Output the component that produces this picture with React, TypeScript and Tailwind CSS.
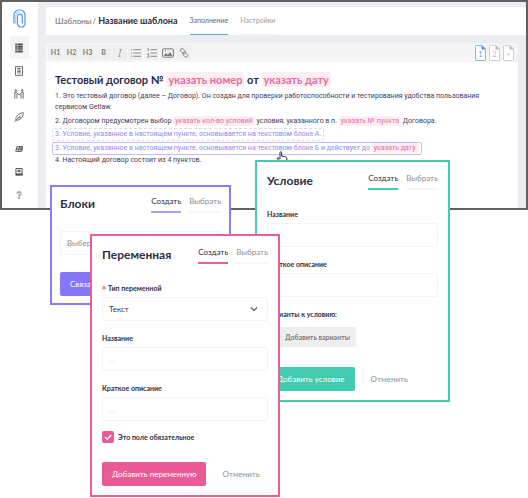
import React from "react";

type Accent = "violet" | "teal" | "pink";

const borders: Record<Accent, string> = {
  violet: "border-[#8a7cf6]",
  teal: "border-[#45cbb0]",
  pink: "border-[#e95d98]",
};
const lines: Record<Accent, string> = {
  violet: "border-[#a99ffa]",
  teal: "border-[#45cbb0]",
  pink: "border-[#e95d98]",
};
const fills: Record<Accent, string> = {
  violet: "bg-[#8578f8]",
  teal: "bg-[#43cbb0]",
  pink: "bg-[#ea5b96]",
};

const field = "block h-6 w-full rounded-xs border border-[#f4f4f5] bg-white px-1.5 text-[8px] text-[#3d3d50]";

function Icon({ children, size = "size-3" }: { children: React.ReactNode; size?: string }) {
  return (
    <svg viewBox="0 0 12 12" className={size} fill="none" stroke="currentColor" strokeWidth="1" aria-hidden="true">
      {children}
    </svg>
  );
}

function Sidebar() {
  const item = "flex h-[23px] w-[19px] items-center justify-center rounded-xs text-[#4c4c4c]";
  return (
    <nav className="flex w-9 shrink-0 flex-col items-center bg-white pt-[7px] pr-0.5">
      <svg viewBox="0 0 13 19" className="mb-2 h-[19px] w-[13px]" fill="none" stroke="#4a9be8" strokeWidth="1.2" strokeLinecap="round" aria-label="Getlaw">
        <path d="M1 14V6a5 5 0 0 1 5-5h1a5 5 0 0 1 5 5v8.500a3.500 3.500 0 0 1-3.500 3.500h-.5A3.500 3.500 0 0 1 4.500 14.500V7.500a2.400 2.400 0 0 1 4.800 0V14" />
        <path d="M2.800 14.500V6.500a3.500 3.500 0 0 1 3.500-3.500" strokeWidth=".8" strokeOpacity=".7" />
      </svg>
      <button aria-label="Шаблоны" className={`${item} bg-[#f4f4f5]`}>
        <Icon size="size-2.5">
          <path d="M1.500 1.500h2M1.500 3.800h2M1.500 6h2M1.500 8.200h2M1.500 10.500h2M4 1.500h6.500M4 3.800h6.500M4 6h6.500M4 8.200h6.500M4 10.500h6.500" strokeWidth="1.700" />
        </Icon>
      </button>
      <button aria-label="Документы" className={item}>
        <Icon size="size-2.5">
          <path d="M1.800.8h8.400v10.400H1.800zM4 3h4M4 4.800h4M4 6.600h4M4 8.400h4" />
        </Icon>
      </button>
      <button aria-label="Контрагенты" className={item}>
        <Icon size="size-2.5">
          <circle cx="2.2" cy="1.8" r="1" />
          <circle cx="9.8" cy="1.8" r="1" />
          <path d="M1 11.500V4h1.800L4.800 6.500h2.400L9.200 4H11v7.500M3.500 11.500V6M8.500 11.500V6" />
        </Icon>
      </button>
      <button aria-label="Подпись" className={item}>
        <Icon size="size-2.5">
          <path d="M.8 11.500 8 4.200M2.200 10C1.500 5.500 5 1.500 11.200.8 11 6 8 10 2.200 10ZM5 7h3.500" strokeWidth=".9" />
        </Icon>
      </button>
      <span className="h-[9px]" />
      <button aria-label="Блоки" className={item}>
        <Icon size="size-2">
          <path d="M3 2.500h8.500L10 9.500H1zM1.800 6H11M6.800 2.500 5 9.500M9 2.500v7" strokeWidth="1.400" />
        </Icon>
      </button>
      <button aria-label="Журнал" className={item}>
        <Icon size="size-2">
          <path d="M1.400.8h9.200v9H1.400zM3.500 3.500h5M3.500 5.500h5M1 8.800h10v2H1" strokeWidth="1.400" />
        </Icon>
      </button>
      <button aria-label="Помощь" className={item}>
        <Icon size="size-2">
          <path d="M3.500 4a2.500 2.500 0 1 1 3.800 2.100C6.300 6.800 6 7 6 8.200M6 9.500v2" stroke="#888" strokeWidth="2.800" />
          <path d="M3.500 4a2.500 2.500 0 1 1 3.800 2.100C6.300 6.800 6 7 6 8" stroke="#fff" strokeWidth=".9" />
        </Icon>
      </button>
    </nav>
  );
}

function Toolbar() {
  const tool = "flex h-[15px] w-[15px] items-center justify-center rounded-xs bg-[#efefef] text-[7px] font-bold text-[#7b7b7b]";
  return (
    <div className="flex h-[19px] items-center gap-px bg-[#f5f5f5] pr-1 pl-0.5">
      <button className={tool}>H1</button>
      <button className={tool}>H2</button>
      <button className={tool}>H3</button>
      <button className={tool}>B</button>
      <button className={tool} aria-label="Курсив">
        <Icon size="size-2">
          <path d="M5 1h4M3 11h4M7.2 1 4.8 11" />
        </Icon>
      </button>
      <button className={tool} aria-label="Список">
        <Icon size="size-2.5">
          <path d="M0 2h1.5M3 2h9M0 6h1.5M3 6h9M0 10h1.5M3 10h9" />
        </Icon>
      </button>
      <button className={tool} aria-label="Нумерованный список">
        <Icon size="size-2.5">
          <path d="M1.3 0v4M0 7h2v4H0M4 2h8M4 6h8M4 10h8" />
        </Icon>
      </button>
      <button className={tool} aria-label="Изображение">
        <Icon>
          <rect x=".6" y="1.8" width="10.8" height="8.4" rx="1" />
          <path d="m1.5 9 2.5-3 1.8 1.8L8 5l2.6 4z" fill="currentColor" stroke="none" />
          <circle cx="3.5" cy="4" r=".7" fill="currentColor" stroke="none" />
        </Icon>
      </button>
      <button className={tool} aria-label="Ссылка">
        <Icon size="size-2.5">
          <rect x="1.2" y="1.8" width="7" height="4" rx="2" transform="rotate(45 4.7 3.8)" />
          <rect x="4" y="6" width="7" height="4" rx="2" transform="rotate(45 7.5 8)" />
        </Icon>
      </button>
      <div className="ml-auto flex gap-[3px]">
        {["1", "2", "+"].map((n, i) => (
          <button key={n} className={`relative flex h-4 w-[11px] items-center justify-center pt-0.5 text-[7px] leading-3 ${i === 0 ? "text-[#4a9be8]" : "text-[#bdbdbd]"}`}>
            <svg viewBox="0 0 11 16" className="absolute inset-0 h-4 w-[11px]" aria-hidden="true">
              <path d="M1.5.5H7L10.5 4v10.5a1 1 0 0 1-1 1h-8a1 1 0 0 1-1-1v-13a1 1 0 0 1 1-1Z" fill="#fff" stroke="currentColor" strokeOpacity=".7" />
              <path d="M6.5 0v4.5H11Z" fill="currentColor" />
            </svg>
            <span className="relative">{n}</span>
          </button>
        ))}
      </div>
    </div>
  );
}

function Variable({ children }: { children: React.ReactNode }) {
  return <span className="rounded-xs bg-[#fdeef4] px-0.5 py-px text-[#ea6a9f]">{children}</span>;
}

function Document() {
  return (
    <article className="grow bg-white pt-2.5 pl-[9px] font-[Roboto,sans-serif] text-[7px] leading-[11px] whitespace-nowrap text-[#3f3d56]">
      <h1 className="mb-[3px] font-[Lato,sans-serif] text-[11px] leading-4 font-bold text-[#2b2b45]">
        Тестовый договор № <Variable>указать номер</Variable> от <Variable>указать дату</Variable>
      </h1>
      <p>
        1. Это тестовый договор (далее – Договор). Он создан для проверки работоспособности и тестирования удобства пользования
        <br />
        сервисом Getlaw.
      </p>
      <p className="mt-[3px]">
        2. Договором предусмотрен выбор <Variable>указать кол-во условий</Variable> условия, указанного в п. <Variable>указать № пункта</Variable> Договора.
      </p>
      <p className="mt-px -ml-[3px] w-fit rounded-xs border border-dashed border-[#dcd7fc] px-0.5 text-[#9388f2]">
        3. Условие, указанное в настоящем пункте, основывается на текстовом блоке А.
      </p>
      <p className="mt-px -ml-[3px] w-fit rounded-xs border border-[#c4bcf8] px-0.5 text-[#9388f2]">
        3. Условие, указанное в настоящем пункте, основывается на текстовом блоке Б и действует до <Variable>указать дату.</Variable>
      </p>
      <p>4. Настоящий договор состоит из 4 пунктов.</p>
    </article>
  );
}

function Panel({ title, accent, className, children }: { title: string; accent: Accent; className: string; children: React.ReactNode }) {
  return (
    <section className={`absolute border-2 bg-white text-[#2f2e45] ${borders[accent]} ${className}`}>
      <header className="flex items-start justify-between">
        <h2 className="pt-[3px] text-[12px] leading-4 font-bold">{title}</h2>
        <div className="flex gap-2 text-[8px] leading-3">
          <button className={`h-5 border-b-2 pt-0.5 pb-1 ${lines[accent]}`}>Создать</button>
          <button className="h-5 border-b-2 border-[#f6f6f6] pt-0.5 pb-1 text-[#8e8e92]">Выбрать</button>
        </div>
      </header>
      {children}
    </section>
  );
}

function Field({ id, label }: { id: string; label: string }) {
  return (
    <div>
      <label htmlFor={id} className="mb-1 block text-[7px] leading-[10px] font-bold">
        {label}
      </label>
      <input id={id} placeholder="..." className={`${field} placeholder:text-[#e0e0e4]`} />
    </div>
  );
}

function Actions({ accent, label }: { accent: Accent; label: string }) {
  return (
    <div className="flex items-center gap-4 text-[8px]">
      <button className={`h-6 rounded-xs px-2.5 text-white ${fills[accent]}`}>{label}</button>
      <button className="text-[#8e8e92]">Отменить</button>
    </div>
  );
}

export default function App() {
  return (
    <main className="relative min-h-[498px] overflow-hidden bg-white font-[Lato,'Noto_Sans',sans-serif]">
      <div className="flex h-[210px] border-2 border-[#606060] bg-[#ebedf0]">
        <Sidebar />
        <div className="flex min-w-0 grow flex-col pt-[5px] pl-2">
          <header className="mb-2 flex h-7 items-center bg-white pl-[9px] text-[8px] text-[#66666e]">
            <a href="#templates">Шаблоны</a>
            <span className="pr-0.5 pl-px">/</span>
            <strong className="text-[9px] text-[#2b2b45]">Название шаблона</strong>
            <nav className="ml-3 flex h-full gap-3 text-[7px]">
              <a href="#fill" className="flex items-center border-b border-[#5aa9e6]">Заполнение</a>
              <a href="#settings" className="flex items-center border-b border-[#f4f4f4] text-[#9a9a9e]">Настройки</a>
            </nav>
          </header>
          <div className="mr-2 flex grow flex-col">
            <Toolbar />
            <Document />
          </div>
        </div>
      </div>

      <svg viewBox="0 0 12 12" className="absolute top-[151px] left-[276px] size-3" fill="#fff" stroke="#333" aria-hidden="true">
        <path d="M4 8V1.5a.8.8 0 0 1 1.6 0V5l4 .8c1 .2 1.4.8 1.3 1.7l-.5 3.5H5L1 7.5c0-.8 1-1 1.6-.5Z" />
      </svg>

      <Panel title="Блоки" accent="violet" className="top-[185px] left-[50px] h-[120px] w-[181px] px-2 pt-1.5">
        <div className="mt-[18px] mb-[17px]">
          <input aria-label="Блок" placeholder="Выберите блок" className={`${field} placeholder:text-[#8e8e92]`} />
        </div>
        <Actions accent="violet" label="Связать блок" />
      </Panel>

      <Panel title="Условие" accent="teal" className="top-[160px] left-[255px] h-[242px] w-[195px] px-2.5 pt-2">
        <div className="mt-[19px] mb-3 flex flex-col gap-3">
          <Field id="condition-name" label="Название" />
          <Field id="condition-note" label="Краткое описание" />
        </div>
        <p className="mb-2 text-[7px] leading-[10px] font-bold">Варианты к условию:</p>
        <button className="mb-5 flex h-5 items-center gap-1 rounded-xs bg-[#eeeeee] px-1.5 text-[7px] font-bold text-[#7d7d80]">
          <Icon size="size-2">
            <path d="M6 1v10M1 6h10" />
          </Icon>
          Добавить варианты
        </button>
        <Actions accent="teal" label="Добавить условие" />
      </Panel>

      <Panel title="Переменная" accent="pink" className="top-[234px] left-[90px] h-[263px] w-[190px] px-2.5 pt-2">
        <div className="mt-[19px] mb-2.5 flex flex-col gap-3">
          <div>
            <label htmlFor="type" className="mb-1 flex text-[7px] leading-[10px] font-bold">
              <svg viewBox="0 0 6 6" className="mt-0.5 size-1.5" stroke="#ff6b6b" strokeWidth="1" aria-hidden="true">
                <path d="M2 .8v4M.3 1.8l3.4 2M.3 3.8l3.4-2" />
              </svg>
              Тип переменной
            </label>
            <div className="relative">
              <select id="type" className={`${field} appearance-none`}>
                <option>Текст</option>
              </select>
              <svg viewBox="0 0 8 8" className="pointer-events-none absolute top-2 right-2.5 size-2" fill="none" stroke="#55555e" strokeWidth="1.2" aria-hidden="true">
                <path d="m1 2.5 3 3 3-3" />
              </svg>
            </div>
          </div>
          <Field id="variable-name" label="Название" />
          <Field id="variable-note" label="Краткое описание" />
        </div>
        <label className="mb-[19px] flex items-center gap-1 text-[7px] leading-3 font-bold">
          <span className="relative size-3">
            <input type="checkbox" defaultChecked className="block size-3 appearance-none rounded-xs bg-[#ea5b96]" />
            <svg viewBox="0 0 12 12" className="pointer-events-none absolute inset-0 size-3" fill="none" stroke="#fff" strokeWidth="1.4" aria-hidden="true">
              <path d="m3 6 2.2 2.2L9.2 4" />
            </svg>
          </span>
          Это поле обязательное
        </label>
        <Actions accent="pink" label="Добавить переменную" />
      </Panel>
    </main>
  );
}
